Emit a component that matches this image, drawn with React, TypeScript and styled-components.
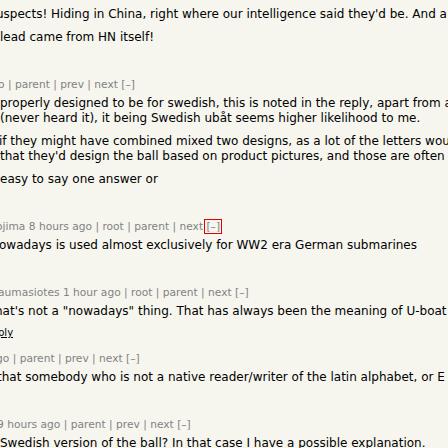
import React from 'react';
import styled, { createGlobalStyle } from 'styled-components';

const Global = createGlobalStyle`
  html, body { margin: 0; padding: 0; background: #f6f6ef; overflow: hidden; }
  body { font-family: "DejaVu Sans", Verdana, sans-serif; }
`;

const Page = styled.div`
  width: 448px;
  height: 448px;
  box-sizing: border-box;
  overflow: hidden;
  background: #f6f6ef;
  padding-top: 7px;
  display: flex;
  flex-direction: column;
`;

const Comment = styled.div`
  display: flex;
  flex-direction: column;
  & + & { margin-top: 13px; }
`;

const Comhead = styled.div<{ $shift?: number }>`
  font-size: 10.67px;
  line-height: 13px;
  color: #828282;
  white-space: nowrap;
  margin-left: ${(p) => p.$shift ?? 0}px;
`;

const Toggle = styled.span<{ $focused?: boolean }>`
  display: inline-block;
  padding: 0 1px;
  margin-left: -1px;
  outline: ${(p) => (p.$focused ? '1px solid #e00000' : 'none')};
  outline-offset: 0;
`;

const CommText = styled.div<{ $first?: boolean }>`
  margin-top: ${(p) => (p.$first ? 0 : 5)}px;
  display: flex;
  flex-direction: column;
  gap: 8px;
  font-size: 12px;
  line-height: 15px;
  color: #000;
`;

const Para = styled.div`
  display: flex;
  flex-direction: column;
`;

const Line = styled.div<{ $shift?: number }>`
  white-space: nowrap;
  margin-left: ${(p) => p.$shift ?? 0}px;
`;

const ReplyRow = styled.div<{ $shift?: number }>`
  margin-top: 7px;
  height: 13px;
  font-size: 10px;
  line-height: 13px;
  white-space: nowrap;
  margin-left: ${(p) => p.$shift ?? 0}px;
`;

const ReplyLink = styled.span`
  color: #000;
  text-decoration: underline;
`;

export default function App() {
  return (
    <>
      <Global />
      <Page>
        <Comment>
          <CommText $first>
            <Para>
              <Line $shift={-4}>uspects! Hiding in China, right where our intelligence said they'd be. And a</Line>
            </Para>
            <Para>
              <Line $shift={0}>lead came from HN itself!</Line>
            </Para>
          </CommText>
          <ReplyRow />
        </Comment>

        <Comment>
          <Comhead $shift={-2}>o | parent | prev | next <Toggle>[–]</Toggle></Comhead>
          <CommText>
            <Para>
              <Line $shift={0}>properly designed to be for swedish, this is noted in the reply, apart from a</Line>
              <Line $shift={0}>(never heard it), it being Swedish ubåt seems higher likelihood to me.</Line>
            </Para>
            <Para>
              <Line $shift={-1}>if they might have combined mixed two designs, as a lot of the letters would</Line>
              <Line $shift={0}>that they'd design the ball based on product pictures, and those are often</Line>
            </Para>
            <Para>
              <Line $shift={0}>easy to say one answer or</Line>
            </Para>
          </CommText>
          <ReplyRow />
        </Comment>

        <Comment>
          <Comhead $shift={-4}>ojima 8 hours ago | root | parent | next <Toggle $focused>[–]</Toggle></Comhead>
          <CommText>
            <Para>
              <Line $shift={-1}>owadays is used almost exclusively for WW2 era German submarines</Line>
            </Para>
          </CommText>
          <ReplyRow />
        </Comment>

        <Comment>
          <Comhead $shift={-2}>aumasiotes 1 hour ago | root | parent | next <Toggle>[–]</Toggle></Comhead>
          <CommText>
            <Para>
              <Line $shift={-5}>hat's not a "nowadays" thing. That has always been the meaning of U-boat</Line>
            </Para>
          </CommText>
          <ReplyRow $shift={-2}><ReplyLink>ply</ReplyLink></ReplyRow>
        </Comment>

        <Comment>
          <Comhead $shift={-4}>go | parent | prev | next <Toggle>[–]</Toggle></Comhead>
          <CommText>
            <Para>
              <Line $shift={-3}>that somebody who is not a native reader/writer of the latin alphabet, or E</Line>
            </Para>
          </CommText>
          <ReplyRow />
        </Comment>

        <Comment>
          <Comhead $shift={-3}>9 hours ago | parent | prev | next <Toggle>[–]</Toggle></Comhead>
          <CommText>
            <Para>
              <Line $shift={0}>Swedish version of the ball? In that case I have a possible explanation.</Line>
            </Para>
          </CommText>
        </Comment>
      </Page>
    </>
  );
}
